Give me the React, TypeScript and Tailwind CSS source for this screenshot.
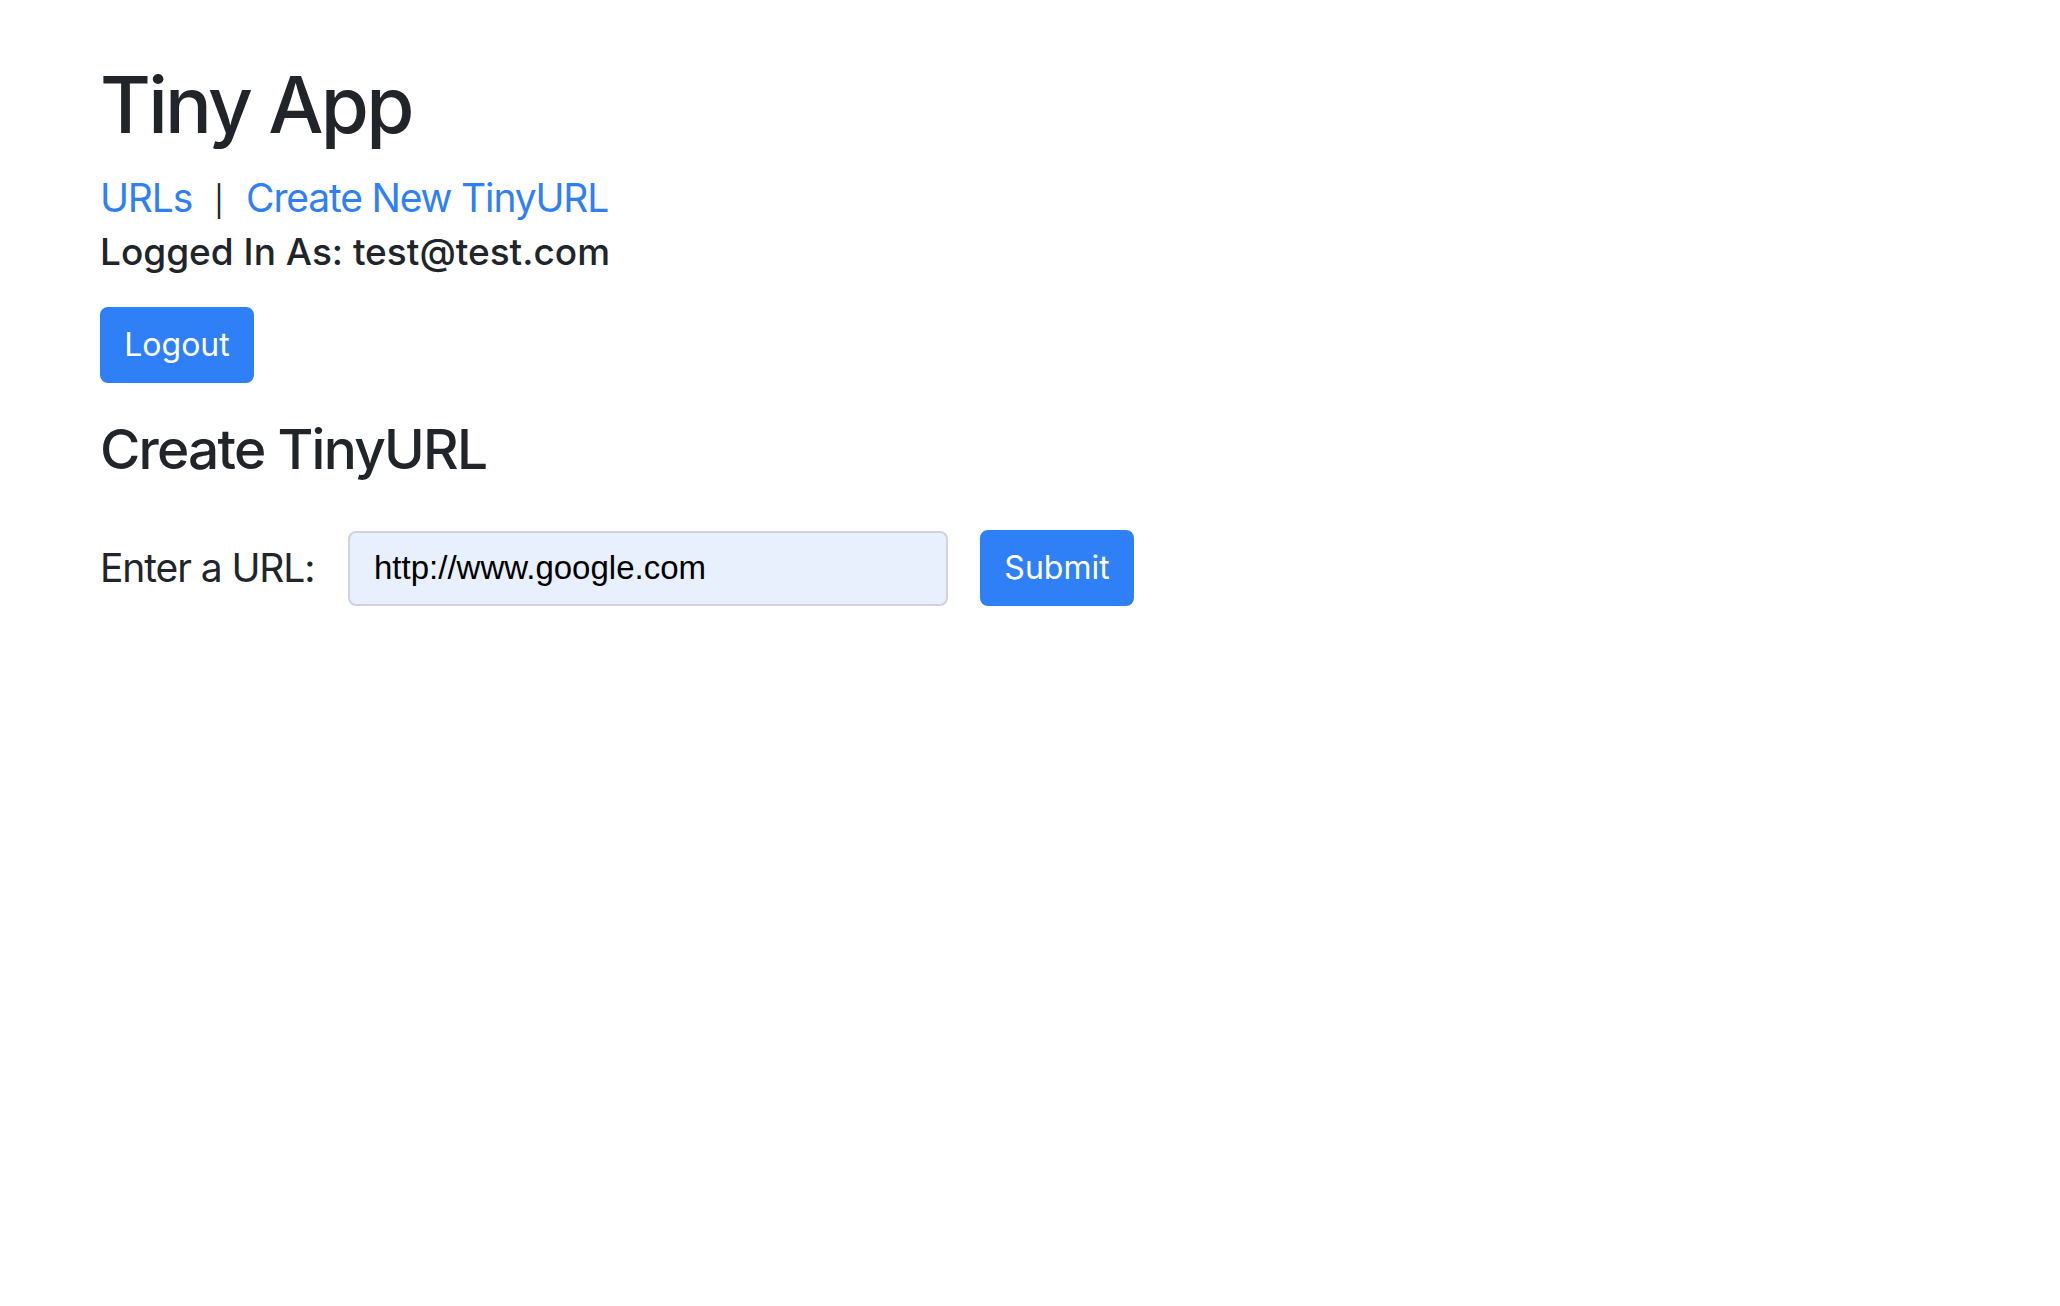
export default function App() {
  return (
    <div className="min-h-screen bg-white px-[100px] pt-[58px] font-['Inter',sans-serif] text-[#212529]">
      <h1 className="text-[78px] leading-[94px] font-medium tracking-[-0.035em] mb-[16px]">Tiny App</h1>
      <div className="text-[39px] leading-[60px] tracking-[-0.03em]">
        <a href="#" className="text-[#2f7ff6]">URLs</a>
        <span className="mx-[22px] text-[30px] tracking-normal">|</span>
        <a href="#" className="text-[#2f7ff6]">Create New TinyURL</a>
      </div>
      <h5 className="text-[37px] leading-[41px] font-medium">Logged In As: test@test.com</h5>
      <button className="mt-[35px] w-[154px] rounded-[8px] border-2 border-[#2f7ff6] bg-[#2f7ff6] py-[12px] text-center text-[32px] leading-[48px] text-white">
        Logout
      </button>
      <h2 className="mt-[33px] text-[55px] leading-[66px] font-medium tracking-[-0.032em]">Create TinyURL</h2>
      <form className="mt-[48px] flex items-center">
        <label className="w-[248px] text-[39px] leading-[48px] tracking-[-0.028em]">Enter a URL:</label>
        <input
          className="h-[75px] w-[600px] rounded-[8px] border-2 border-[#ced4da] bg-[#e8f0fe] px-[24px] font-['Liberation_Sans',sans-serif] text-[33px] text-black outline-none"
          defaultValue="http://www.google.com"
        />
        <button
          type="button"
          className="ml-[32px] w-[154px] rounded-[8px] border-2 border-[#2f7ff6] bg-[#2f7ff6] py-[12px] text-center text-[32px] leading-[48px] text-white"
        >
          Submit
        </button>
      </form>
    </div>
  );
}
